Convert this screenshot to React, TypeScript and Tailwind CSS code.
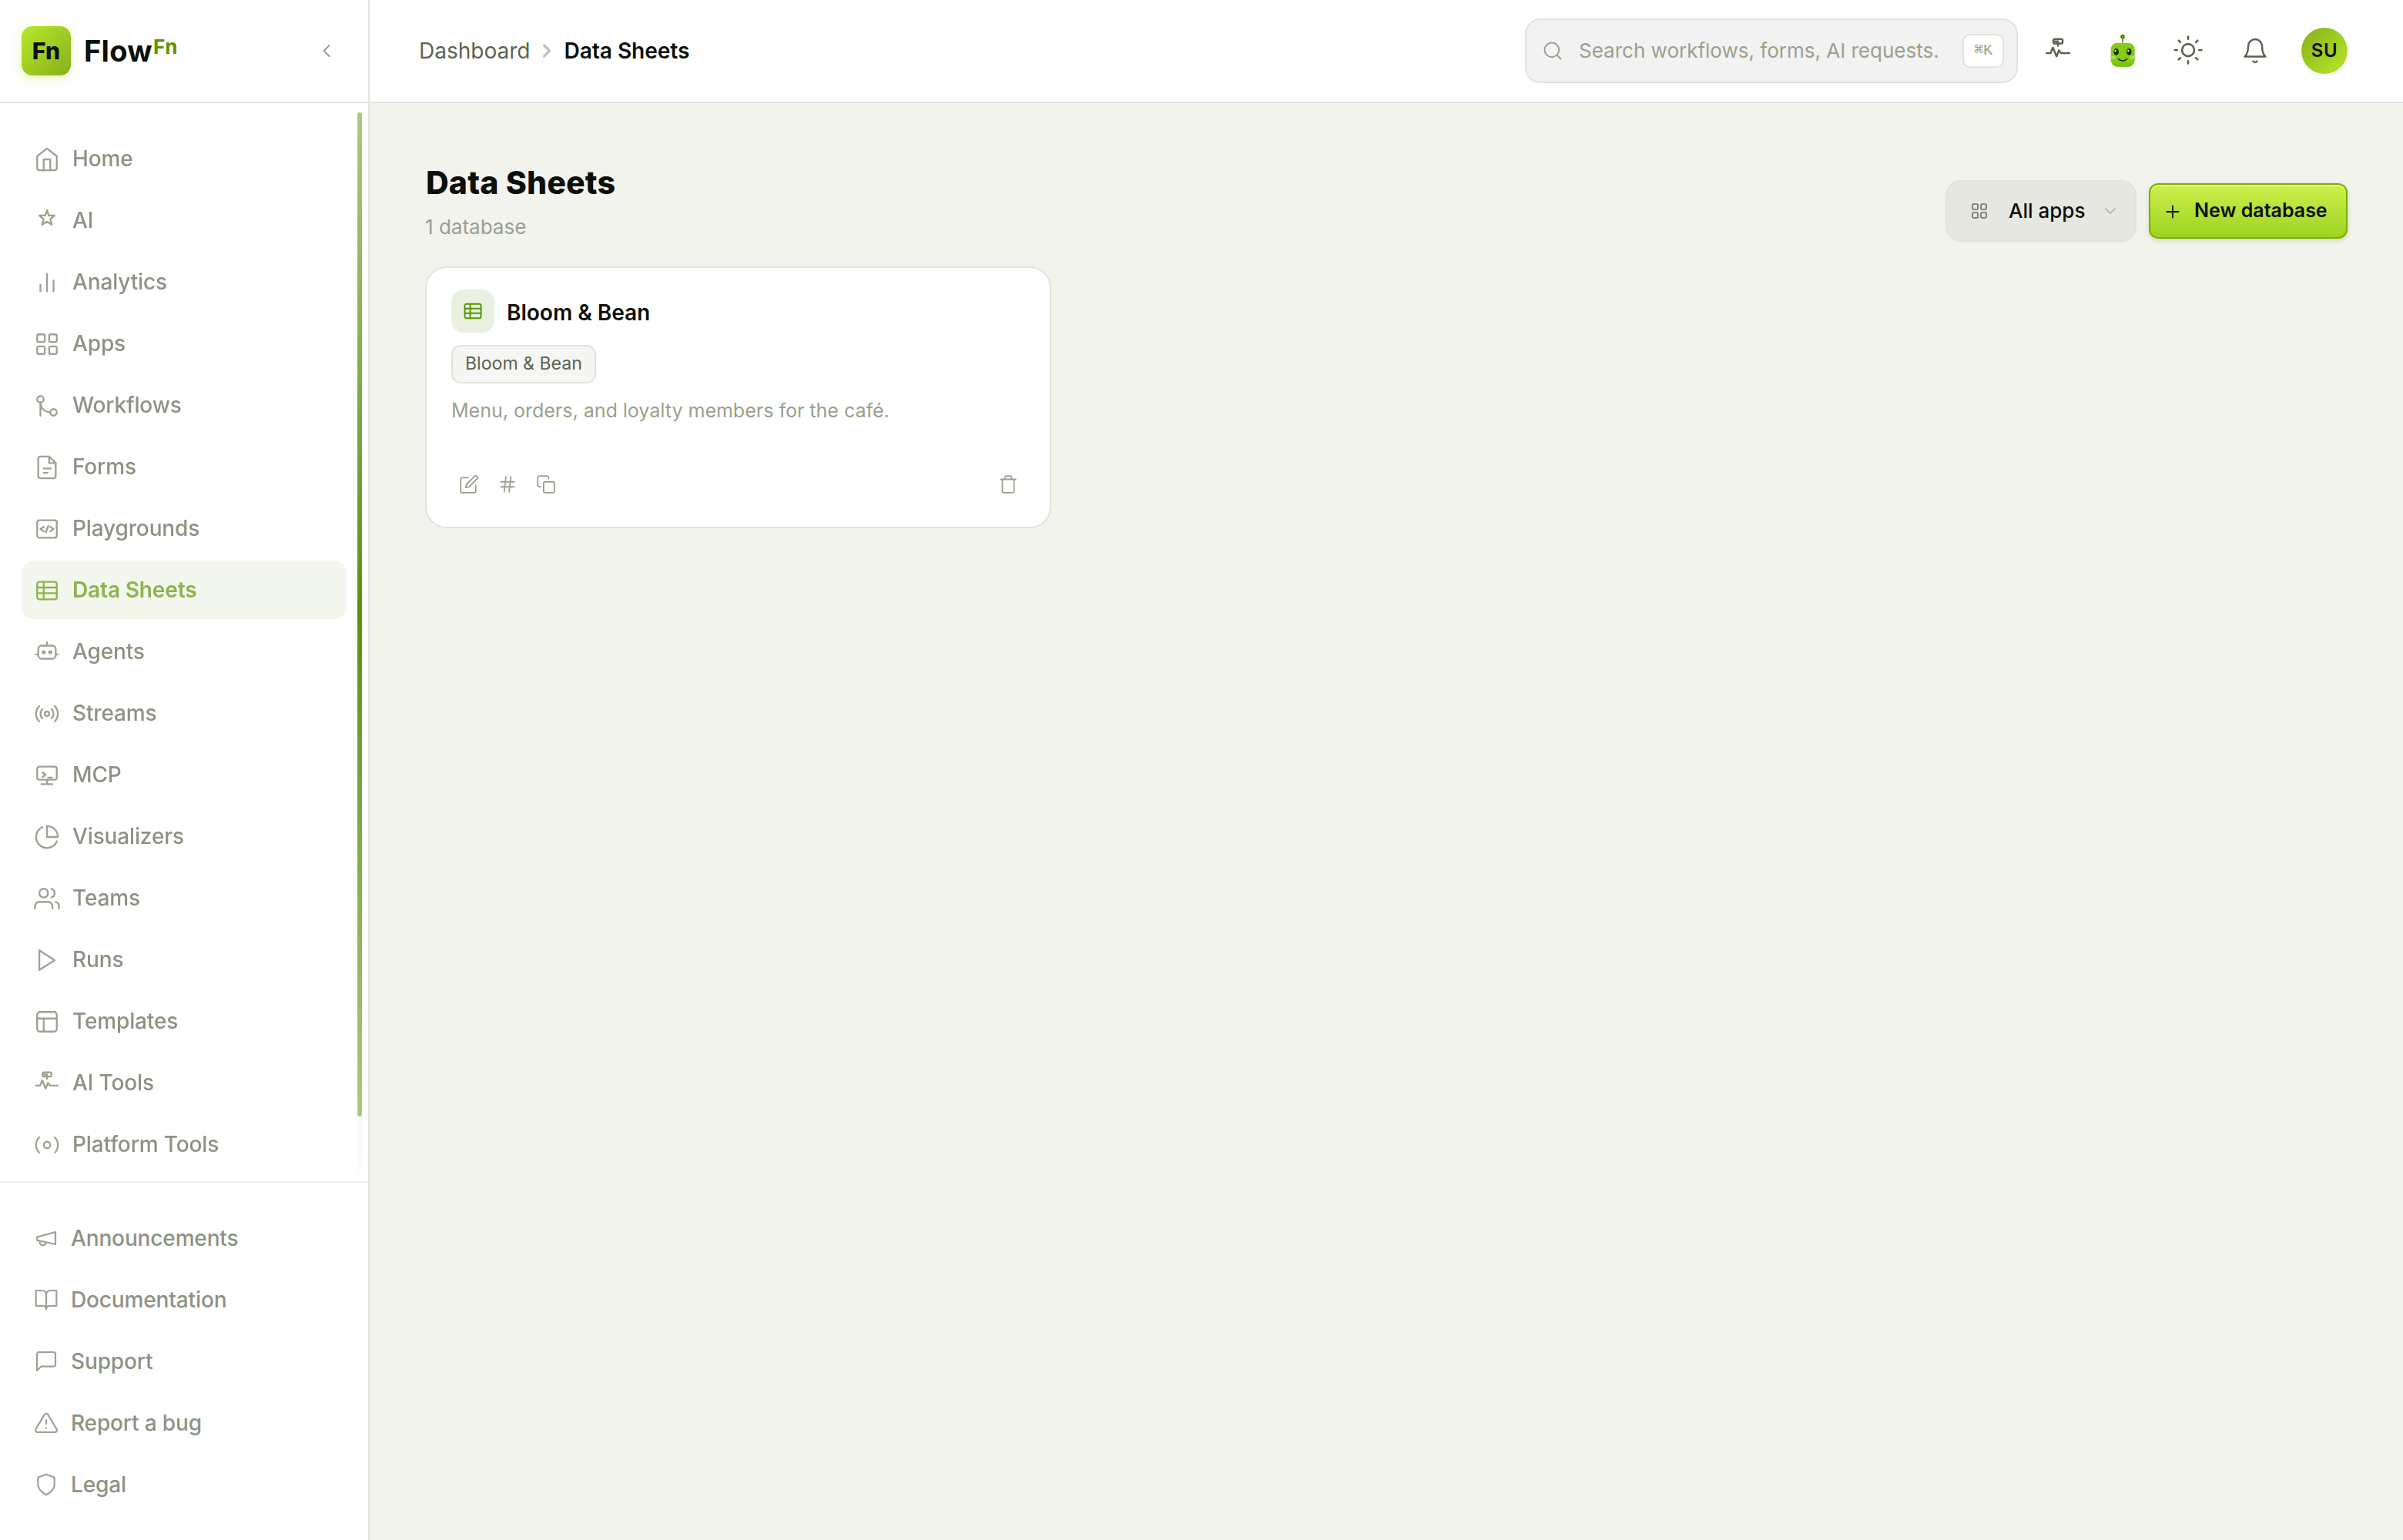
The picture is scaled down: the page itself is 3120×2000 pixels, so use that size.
import React from 'react';

type IconProps = {
  className?: string;
  stroke?: number;
  children?: React.ReactNode;
};

const Svg = ({ className = '', stroke = 1.65, children }: IconProps) => (
  <svg
    className={`shrink-0 ${className}`}
    viewBox="0 0 24 24"
    fill="none"
    stroke="currentColor"
    strokeWidth={stroke}
    strokeLinecap="round"
    strokeLinejoin="round"
  >
    {children}
  </svg>
);

const icons = {
  home: <><path d="M3 9l9-7 9 7v11a2 2 0 0 1-2 2H5a2 2 0 0 1-2-2z" /><path d="M9 22V12h6v10" /></>,
  ai: <path d="M12 2l1.6 4.9 5.4.1-3.9 3.3 1.3 5.1-4.4-2.8-4.4 2.8 1.3-5.1L5 7l5.4-.1z" />,
  analytics: <path d="M18 20V10M12 20V4M6 20v-6" />,
  apps: (
    <>
      <rect x="3" y="3" width="7" height="7" rx="1.5" />
      <rect x="14" y="3" width="7" height="7" rx="1.5" />
      <rect x="3" y="14" width="7" height="7" rx="1.5" />
      <rect x="14" y="14" width="7" height="7" rx="1.5" />
    </>
  ),
  workflows: <><circle cx="6" cy="6" r="3" /><circle cx="18" cy="18" r="3" /><path d="M6 21V9a9 9 0 0 0 9 9" /></>,
  forms: (
    <>
      <path d="M14 2H6a2 2 0 0 0-2 2v16a2 2 0 0 0 2 2h12a2 2 0 0 0 2-2V8z" />
      <path d="M14 2v6h6M9 13h6.5M9 17h3.5" />
    </>
  ),
  playgrounds: (
    <>
      <rect x="3" y="4" width="18" height="16" rx="2" />
      <path d="M9 10l-3 2 3 2.2M15 10l3 2-3 2.2M13.2 9.3L11 15" />
    </>
  ),
  table: <><rect x="3" y="4" width="18" height="16" rx="2" /><path d="M3 9.2h18M3 14.4h18M9 4v16" /></>,
  agents: (
    <>
      <rect x="4" y="6" width="16" height="12" rx="3" />
      <circle cx="9" cy="12" r="1" />
      <circle cx="15" cy="12" r="1" />
      <path d="M12 3v3M2 14h2M20 14h2" />
    </>
  ),
  streams: (
    <>
      <circle cx="12" cy="12" r="2" />
      <path d="M16.24 7.76a6 6 0 0 1 0 8.49M7.76 16.24a6 6 0 0 1 0-8.49M19.07 4.93a10 10 0 0 1 0 14.14M4.93 19.07a10 10 0 0 1 0-14.14" />
    </>
  ),
  mcp: (
    <>
      <rect x="3" y="4" width="18" height="12" rx="2" />
      <path d="M12 16v4M7 20h10M8 9.3l2.6 2-2.6 2.2M13.2 14h3.3" />
    </>
  ),
  visualizers: <><path d="M21.21 15.89A10 10 0 1 1 8 2.83" /><path d="M22 12A10 10 0 0 0 12 2v10z" /></>,
  teams: (
    <>
      <path d="M17 21v-2a4 4 0 0 0-4-4H5a4 4 0 0 0-4 4v2" />
      <circle cx="9" cy="7" r="4" />
      <path d="M23 21v-2a4 4 0 0 0-3-3.87M16 3.13a4 4 0 0 1 0 7.75" />
    </>
  ),
  runs: <path d="M5 3l14 9-14 9z" />,
  templates: <><rect x="3" y="3" width="18" height="18" rx="2.5" /><path d="M3 9h18M9 21V9" /></>,
  tools: (
    <>
      <rect x="8" y="1.9" width="8" height="3.8" rx="1" />
      <path d="M9.2 3.9H12V7.7M2 14h3.6l2-4.8 3.2 7.6 2.1-5.2L14.8 14H22" />
    </>
  ),
  platform: (
    <>
      <circle cx="12" cy="12" r="3" />
      <path d="M19.07 4.93a10 10 0 0 1 0 14.14M4.93 19.07a10 10 0 0 1 0-14.14" />
    </>
  ),
  megaphone: <><path d="M3 11l18-5v12L3 14v-3z" /><path d="M11.6 16.8a3 3 0 1 1-5.8-1.6" /></>,
  book: <><path d="M2 3h6a4 4 0 0 1 4 4v14a3 3 0 0 0-3-3H2z" /><path d="M22 3h-6a4 4 0 0 0-4 4v14a3 3 0 0 1 3-3h7z" /></>,
  support: <path d="M21 15a2 2 0 0 1-2 2H7l-4 4V5a2 2 0 0 1 2-2h14a2 2 0 0 1 2 2z" />,
  bug: (
    <>
      <path d="M10.29 3.86L1.82 18a2 2 0 0 0 1.71 3h16.94a2 2 0 0 0 1.71-3L13.71 3.86a2 2 0 0 0-3.42 0z" />
      <path d="M12 9v4M12 17h.01" />
    </>
  ),
  legal: <path d="M12 22s8-4 8-10V5l-8-3-8 3v7c0 6 8 10 8 10z" />,
  search: <><circle cx="11" cy="11" r="8" /><path d="M21 21l-4.35-4.35" /></>,
  sun: (
    <>
      <circle cx="12" cy="12" r="5" />
      <path d="M12 1v2M12 21v2M4.22 4.22l1.42 1.42M18.36 18.36l1.42 1.42M1 12h2M21 12h2M4.22 19.78l1.42-1.42M18.36 5.64l1.42-1.42" />
    </>
  ),
  bell: <><path d="M18 8A6 6 0 0 0 6 8c0 7-3 9-3 9h18s-3-2-3-9" /><path d="M13.73 21a2 2 0 0 1-3.46 0" /></>,
  plus: <path d="M12 5v14M5 12h14" />,
  left: <path d="M15 18l-6-6 6-6" />,
  right: <path d="M9 18l6-6-6-6" />,
  down: <path d="M6 9l6 6 6-6" />,
  edit: (
    <>
      <path d="M11 4H4a2 2 0 0 0-2 2v14a2 2 0 0 0 2 2h14a2 2 0 0 0 2-2v-7" />
      <path d="M18.5 2.5a2.121 2.121 0 0 1 3 3L12 15l-4 1 1-4 9.5-9.5z" />
    </>
  ),
  hash: <path d="M4 9h16M4 15h16M10 3L8 21M16 3l-2 18" />,
  copy: <><rect x="9" y="9" width="13" height="13" rx="2" /><path d="M5 15H4a2 2 0 0 1-2-2V4a2 2 0 0 1 2-2h9a2 2 0 0 1 2 2v1" /></>,
  trash: <path d="M3 6h18M19 6v14a2 2 0 0 1-2 2H7a2 2 0 0 1-2-2V6m3 0V4a2 2 0 0 1 2-2h4a2 2 0 0 1 2 2v2" />,
};

type IconName = keyof typeof icons;

const mainLinks: { label: string; icon: IconName }[] = [
  { label: 'Home', icon: 'home' },
  { label: 'AI', icon: 'ai' },
  { label: 'Analytics', icon: 'analytics' },
  { label: 'Apps', icon: 'apps' },
  { label: 'Workflows', icon: 'workflows' },
  { label: 'Forms', icon: 'forms' },
  { label: 'Playgrounds', icon: 'playgrounds' },
  { label: 'Data Sheets', icon: 'table' },
  { label: 'Agents', icon: 'agents' },
  { label: 'Streams', icon: 'streams' },
  { label: 'MCP', icon: 'mcp' },
  { label: 'Visualizers', icon: 'visualizers' },
  { label: 'Teams', icon: 'teams' },
  { label: 'Runs', icon: 'runs' },
  { label: 'Templates', icon: 'templates' },
  { label: 'AI Tools', icon: 'tools' },
  { label: 'Platform Tools', icon: 'platform' },
];

const footerLinks: { label: string; icon: IconName }[] = [
  { label: 'Announcements', icon: 'megaphone' },
  { label: 'Documentation', icon: 'book' },
  { label: 'Support', icon: 'support' },
  { label: 'Report a bug', icon: 'bug' },
  { label: 'Legal', icon: 'legal' },
];

const Robot = () => (
  <svg className="h-11 w-9" viewBox="0 0 108 132">
    <path d="M54 18v18" stroke="#6b7355" strokeWidth="5" />
    <circle cx="54" cy="11" r="9" fill="#84cc16" />
    <circle cx="54" cy="11" r="5.5" fill="#84cc16" stroke="#2f5208" strokeWidth="3.5" />
    <rect x="8" y="35" width="93" height="93" rx="25" fill="#84cc16" />
    <path d="M16 118c12-9 65-9 77 0-5 7-10 10-18 10H34c-8 0-13-3-18-10z" fill="#7cc212" />
    <ellipse cx="16" cy="92" rx="10" ry="6.5" fill="#a9dc5c" />
    <ellipse cx="93" cy="92" rx="10" ry="6.5" fill="#a9dc5c" />
    <ellipse cx="29" cy="70" rx="9.5" ry="13" fill="#1a2e05" />
    <ellipse cx="79" cy="70" rx="9.5" ry="13" fill="#1a2e05" />
    <circle cx="26" cy="66" r="3.5" fill="#fff" />
    <circle cx="76" cy="66" r="3.5" fill="#fff" />
    <path d="M37 98q17 14 34 0" fill="none" stroke="#1a2e05" strokeWidth="4.5" strokeLinecap="round" />
  </svg>
);

const Sidebar = () => (
  <aside className="flex w-[480px] shrink-0 flex-col border-r-2 border-[#e2e4da] bg-white">
    {/* Logo */}
    <div className="flex h-[134px] shrink-0 items-center border-b-2 border-[#e2e4da] pl-7">
      <div className="flex size-16 items-center justify-center rounded-[14px] bg-linear-135 from-[#b8e92a] to-[#87b01c] text-[30px] font-extrabold tracking-[0.2px] text-[#0d0f0a] shadow-[0_4px_16px_rgba(184,233,42,0.3)]">
        Fn
      </div>
      <div className="ml-[17px] flex items-start text-[38px] leading-[48px] font-bold tracking-[0.3px] text-[#0d0f0a]">
        Flow
        <span className="ml-px text-[26px] leading-[37px] tracking-[0.6px] text-[#5a9200]">Fn</span>
      </div>
      <Svg className="mr-10 ml-auto size-7 text-[#9aa08e]" stroke={1.8}>{icons.left}</Svg>
    </div>

    {/* Main links */}
    <div className="flex h-[1400px] shrink-0 mask-[linear-gradient(to_bottom,black_calc(100%-40px),transparent)]">
      <nav className="flex flex-1 flex-col gap-1 pt-[34px] pr-3.5 pl-7">
        {mainLinks.map((link) => (
          <a
            key={link.label}
            href="#"
            className={`flex h-[76px] shrink-0 items-center gap-4 rounded-2xl pl-4 text-[28px] tracking-[-0.14px] ${
              link.label === 'Data Sheets' ? 'bg-[#f3f6ec] font-semibold text-[#8cb34d]' : 'font-medium text-[#8d9284]'
            }`}
          >
            <Svg className={`mt-0.5 size-[34px] ${link.label === 'Data Sheets' ? '' : 'text-[#9da293]'}`}>
              {icons[link.icon]}
            </Svg>
            {link.label}
          </a>
        ))}
      </nav>
      <div className="mt-3 mr-2 w-1.5 rounded-full bg-[#f9f9f9]">
        <div className="h-[1304px] rounded-full bg-linear-to-b from-[#adc981] via-[#5a9200] to-[#adc981]" />
      </div>
    </div>

    {/* Footer links */}
    <nav className="flex flex-1 flex-col gap-1 border-t-2 border-[#edeee8] px-7 pt-[34px]">
      {footerLinks.map((link) => (
        <a key={link.label} href="#" className="flex h-[76px] items-center gap-4 pl-4 text-[28px] font-medium tracking-[-0.14px] text-[#8d9284]">
          <Svg className="size-8 text-[#9da293]">{icons[link.icon]}</Svg>
          {link.label}
        </a>
      ))}
    </nav>
  </aside>
);

const Header = () => (
  <header className="flex h-[134px] items-center border-b-2 border-[#e2e4da] bg-white pr-[72px] pl-16">
    <div className="flex items-center gap-2 text-[28px]">
      <a href="#" className="text-[#5c6350]">Dashboard</a>
      <Svg className="size-7 text-[#c0c0c0]" stroke={2.8}>{icons.right}</Svg>
      <span className="font-semibold text-[#0d0f0a]">Data Sheets</span>
    </div>

    {/* Search */}
    <div className="ml-auto flex h-[84px] w-[640px] items-center rounded-[20px] border-2 border-[#e2e4da] bg-[#f2f2f2] pr-4 pl-5 text-[#9aa08c]">
      <Svg className="size-7">{icons.search}</Svg>
      <span className="ml-5 flex-1 pb-0.5 text-[26px]">Search workflows, forms, AI requests.</span>
      <kbd className="flex h-11 w-[54px] items-center justify-center rounded-[10px] border-2 border-[#e2e4da] bg-white font-['Liberation_Mono','DejaVu_Sans_Mono',monospace] text-[20px]">
        ⌘K
      </kbd>
    </div>

    <div className="flex items-center text-[#5c6350]">
      <button className="ml-4 flex w-[72px] justify-center"><Svg className="size-9">{icons.tools}</Svg></button>
      <button className="ml-3 flex w-[72px] justify-center"><Robot /></button>
      <button className="ml-[13px] flex w-[72px] justify-center"><Svg className="mb-0.5 size-[38px]">{icons.sun}</Svg></button>
      <button className="ml-[15px] flex w-[72px] justify-center"><Svg className="size-9">{icons.bell}</Svg></button>
      <div className="ml-6 flex size-[60px] items-center justify-center rounded-full bg-linear-135 from-[#87b01c] to-[#b8e92a] text-2xl font-semibold tracking-[0.5px] text-[#0d0f0a]">
        SU
      </div>
    </div>
  </header>
);

const DatabaseCard = () => (
  <article className="flex h-[340px] flex-col rounded-[28px] border-2 border-[#e2e4da] bg-white px-8 pt-7 pb-8">
    <div className="flex h-14 items-center gap-4">
      <div className="flex size-14 items-center justify-center rounded-2xl bg-[#e9f0df] text-[#5a9200]">
        <Svg className="size-7">{icons.table}</Svg>
      </div>
      <h2 className="pt-1 text-[28px] font-semibold text-[#0d0f0a]">Bloom &amp; Bean</h2>
    </div>
    <span className="mt-4 flex h-[50px] items-center self-start rounded-xl border-2 border-[#e2e4da] bg-[#f5f5f4] px-4 pb-0.5 text-[23px] tracking-[0.05px] text-[#5c6350]">
      Bloom &amp; Bean
    </span>
    <p className="mt-4 text-[25px] leading-[38px] text-[#9aa08c]">Menu, orders, and loyalty members for the café.</p>
    <div className="mt-auto flex gap-1 text-[#9aa08c]">
      <button className="flex size-[46px] items-center justify-center"><Svg className="size-[26px]">{icons.edit}</Svg></button>
      <button className="flex size-[46px] items-center justify-center"><Svg className="size-[26px]">{icons.hash}</Svg></button>
      <button className="flex size-[46px] items-center justify-center"><Svg className="size-[26px]">{icons.copy}</Svg></button>
      <button className="-mr-px ml-auto flex size-[46px] items-center justify-center"><Svg className="size-[26px]">{icons.trash}</Svg></button>
    </div>
  </article>
);

const App = () => {
  return (
    <div className="flex h-[2000px] w-[3120px] overflow-hidden bg-[#f2f3ed] font-['Inter',sans-serif]">
      <Sidebar />
      <div className="flex flex-1 flex-col">
        <Header />
        <main className="px-[72px] pt-[79px]">
          <div className="flex h-[133px] items-start justify-between">
            <div>
              <h1 className="ml-px text-[41px] leading-[48px] font-extrabold tracking-[0.2px] text-[#0d0f0a]">Data Sheets</h1>
              <p className="mt-4 text-[26px] leading-9 text-[#9aa08c]">1 database</p>
            </div>
            <div className="flex items-center gap-4 pt-[21px]">
              <button className="flex h-20 w-[248px] items-center rounded-[20px] border-2 border-[#e2e4da] bg-[#e6e7e1] pl-5 text-[26px] font-medium text-[#0d0f0a]">
                <span className="flex size-11 items-center justify-center rounded-xl border-2 border-dashed border-[#e2e4da] text-[#6b705f]">
                  <Svg className="size-6">{icons.apps}</Svg>
                </span>
                <span className="ml-4 pb-0.5">All apps</span>
                <Svg className="mr-5 ml-auto size-6 text-[#a9ae9b]">{icons.down}</Svg>
              </button>
              <button className="flex h-[72px] w-[258px] items-center rounded-xl border-2 border-[#7fac00] bg-linear-to-b from-[#cdf04a] to-[#9dd41f] pl-4 text-[25px] font-semibold text-[#0d0f0a] shadow-[0_2px_6px_rgba(90,146,0,0.25),inset_0_2px_0_rgba(255,255,255,0.4)]">
                <Svg className="mt-0.5 size-[26px]">{icons.plus}</Svg>
                <span className="ml-[15px]">New database</span>
              </button>
            </div>
          </div>
          <div className="grid grid-cols-3 gap-7">
            <DatabaseCard />
          </div>
        </main>
      </div>
    </div>
  );
};

export default App;
